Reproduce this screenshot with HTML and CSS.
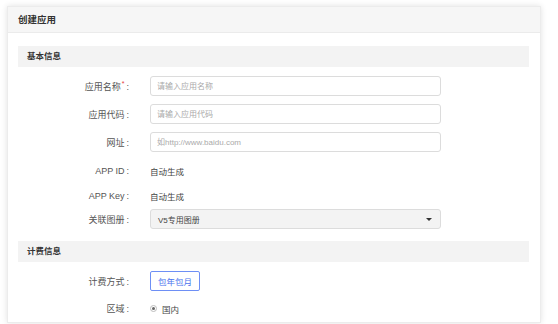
FILE: index.html
```html
<!DOCTYPE html>
<html lang="zh-CN">
<head>
    <meta charset="UTF-8">
    <title>创建应用</title>
    <link rel="stylesheet" href="styles.css">
</head>
<body>
    <div class="card">
        <div class="card-header">创建应用</div>
        <div class="card-body">
            <div class="section-title">基本信息</div>
            <div class="row">
                <label class="label">应用名称<span class="required">*</span><span class="colon">:</span></label>
                <input type="text" class="field" placeholder="请输入应用名称">
            </div>
            <div class="row">
                <label class="label">应用代码<span class="colon">:</span></label>
                <input type="text" class="field" placeholder="请输入应用代码">
            </div>
            <div class="row">
                <label class="label">网址<span class="colon">:</span></label>
                <input type="text" class="field" placeholder="如http://www.baidu.com">
            </div>
            <div class="row row-id">
                <label class="label">APP ID<span class="colon">:</span></label>
                <span class="value">自动生成</span>
            </div>
            <div class="row row-key">
                <label class="label">APP Key<span class="colon">:</span></label>
                <span class="value">自动生成</span>
            </div>
            <div class="row row-select">
                <label class="label">关联图册<span class="colon">:</span></label>
                <div class="select">
                    <span>V5专用图册</span>
                    <span class="caret"></span>
                </div>
            </div>

            <div class="section-title">计费信息</div>
            <div class="row">
                <label class="label">计费方式<span class="colon">:</span></label>
                <button class="option-btn">包年包月</button>
            </div>
            <div class="row row-last">
                <label class="label">区域<span class="colon">:</span></label>
                <span class="radio"><span class="radio-dot"></span></span>
                <span class="value">国内</span>
            </div>
        </div>
    </div>
</body>
</html>
```

FILE: styles.css
```css
body {
    margin: 0;
    padding: 6px 7px 0;
    background: #fff;
    font-family: "Liberation Sans", "Noto Sans CJK SC", sans-serif;
    font-size: 9px;
    color: #555;
    height: 324px;
    box-sizing: border-box;
    overflow: hidden;
}
.card {
    width: 534px;
    box-sizing: border-box;
    border: 1px solid #ececec;
    box-shadow: 0 0 6px rgba(0, 0, 0, 0.12);
    background: #fff;
}
.card-header {
    height: 25px;
    line-height: 25px;
    padding-left: 10px;
    background: #f6f6f6;
    border-bottom: 1px solid #ebebeb;
    font-size: 9.5px;
    font-weight: bold;
    color: #333;
}
.card-body {
    padding: 13px 11px 0 10px;
}
.section-title {
    height: 21px;
    line-height: 21px;
    padding-left: 9px;
    background: #f3f3f3;
    font-size: 8.5px;
    font-weight: bold;
    color: #333;
    margin-bottom: 5px;
}
.row {
    display: flex;
    align-items: center;
    height: 28px;
}
.row-id {
    height: 30px;
}
.row-key {
    height: 20px;
}
.row-select {
    height: 26px;
    margin-bottom: 9px;
}
.row-last {
    height: 27px;
}
.label {
    width: 111px;
    text-align: right;
    margin-right: 21px;
    color: #555;
    white-space: nowrap;
}
.colon {
    margin-left: 2px;
}
.required {
    color: #e4393c;
    font-size: 7px;
    vertical-align: top;
    margin-left: 1px;
}
.field {
    width: 291px;
    height: 20px;
    box-sizing: border-box;
    border: 1px solid #dcdcdc;
    border-radius: 3px;
    padding: 0 6px;
    font-family: inherit;
    font-size: 8px;
    color: #555;
    outline: none;
}
.field::placeholder {
    color: #aaa;
}
.value {
    font-size: 8.5px;
    color: #444;
}
.select {
    width: 291px;
    height: 20px;
    box-sizing: border-box;
    border: 1px solid #dcdcdc;
    border-radius: 3px;
    background: #f3f3f3;
    padding: 0 8px 0 7px;
    display: flex;
    align-items: center;
    justify-content: space-between;
    font-size: 8px;
    color: #444;
}
.caret {
    width: 0;
    height: 0;
    border-left: 3px solid transparent;
    border-right: 3px solid transparent;
    border-top: 3px solid #333;
}
.option-btn {
    height: 20px;
    padding: 0 7px;
    border: 1px solid #6e8ff5;
    border-radius: 2px;
    background: #fff;
    color: #4a73ee;
    font-family: inherit;
    font-size: 8.5px;
    cursor: pointer;
}
.radio {
    width: 7px;
    height: 7px;
    box-sizing: border-box;
    border: 1px solid #bbb;
    border-radius: 50%;
    display: flex;
    align-items: center;
    justify-content: center;
    margin-right: 5px;
}
.radio-dot {
    width: 3px;
    height: 3px;
    border-radius: 50%;
    background: #666;
}
```
